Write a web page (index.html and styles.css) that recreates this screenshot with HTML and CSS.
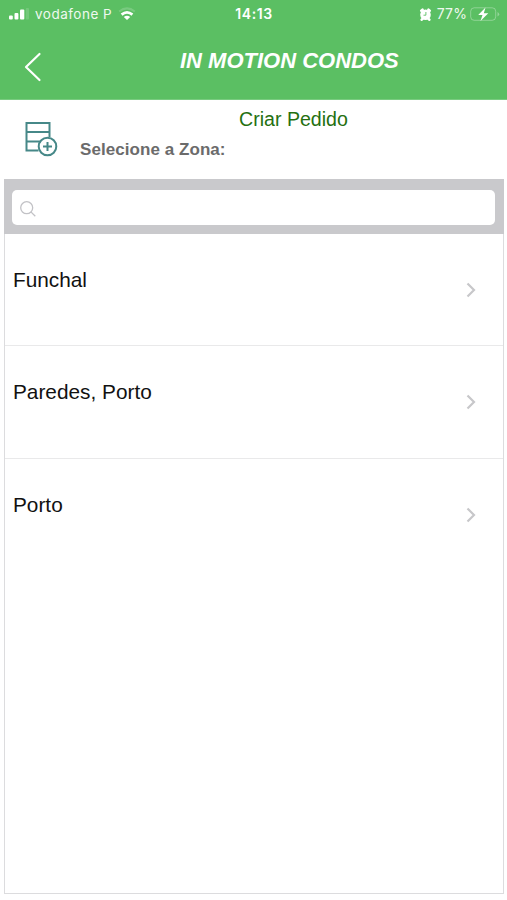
FILE: index.html
```html
<!DOCTYPE html>
<html lang="pt">
<head>
<meta charset="utf-8">
<title>In Motion Condos</title>
<link rel="stylesheet" href="styles.css">
</head>
<body>
<header class="header">
  <div class="status">
    <div class="status-left">
      <svg class="signal" width="20" height="12" viewBox="0 0 20 12" fill="#fff"><rect x="0" y="7.500" width="3.800" height="4.100" rx="1"/><rect x="5.500" y="5" width="3.900" height="6.600" rx="1"/><rect x="11" y="1.500" width="4.300" height="10.100" rx="1"/><rect x="16.800" y="0" width="3.200" height="11.600" rx="1" opacity=".15"/></svg>
      <span class="carrier">vodafone P</span>
      <svg class="wifi" width="18" height="14" viewBox="0 0 18 14" fill="none" stroke="#fff"><path d="M1.200 4.500Q9-1.800 16.800 4.500" stroke-width="2" opacity=".18"/><path d="M3.600 7.600Q9 3 14.400 7.600" stroke-width="2.700"/><path d="M5.800 10Q9 7.500 12.200 10L9 13z" fill="#fff" stroke="none"/></svg>
    </div>
    <span class="time">14:13</span>
    <div class="status-right">
      <svg class="alarm" width="13" height="13" viewBox="0 0 13 13"><path d="M2.300 2.700 3.500 1.700M10.700 2.700 9.500 1.700M3.200 11.200l-.5.500M9.800 11.200l.5.500" stroke="#fff" stroke-width="2.600" stroke-linecap="round"/><circle cx="6.500" cy="6.700" r="5.300" fill="#fff"/><path d="M6.900 4v3.200H4.500" fill="none" stroke="#5bbf63" stroke-width=".9"/></svg>
      <span class="percent">77%</span>
      <svg class="battery" width="30" height="15" viewBox="0 0 30 15"><rect x=".7" y=".8" width="25" height="12.500" rx="3.500" fill="none" stroke="#fff" opacity=".32"/><path d="M27.500 5v4.500q1.700-.7 1.700-2.200T27.500 5" fill="#fff" opacity=".35"/><path d="M15.500.5 8.200 8h4.300l-2 6L18.300 6.300h-4.500z" fill="#fff"/></svg>
    </div>
  </div>
  <div class="nav">
    <svg class="back" width="18" height="30" viewBox="0 0 18 30" fill="none" stroke="#fff" stroke-width="2.200" stroke-linecap="round" stroke-linejoin="round"><path d="M15.500 2 2 15 15.500 28"/></svg>
    <h1 class="title">IN MOTION CONDOS</h1>
  </div>
</header>
<section class="intro">
  <svg class="request" width="34" height="36" viewBox="0 0 34 36" fill="none" stroke="#468888" stroke-width="2"><path d="M14.500 29.500H2.500V2h23v14M2.500 11h23M2.500 20.500h14"/><circle cx="23.500" cy="25.500" r="8.800"/><path d="M23.500 21v9M19 25.500h9"/></svg>
  <div class="intro-text">
    <div class="heading">Criar Pedido</div>
    <div class="prompt">Selecione a Zona:</div>
  </div>
</section>
<main class="panel">
  <div class="searchbar">
    <div class="field">
      <svg width="16" height="16" viewBox="0 0 16 16" fill="none" stroke="#c2c2c6" stroke-width="1.300"><circle cx="6.700" cy="6.700" r="6"/><path d="M10.900 10.900 15.300 15.300"/></svg>
    </div>
  </div>
  <ul class="list">
    <li class="row"><span class="name">Funchal</span><svg class="chevron" width="10" height="16" viewBox="0 0 10 16"><path d="M1.500 1.500 8 8l-6.500 6.500"/></svg></li>
    <li class="row"><span class="name">Paredes, Porto</span><svg class="chevron" width="10" height="16" viewBox="0 0 10 16"><path d="M1.500 1.500 8 8l-6.500 6.500"/></svg></li>
    <li class="row"><span class="name">Porto</span><svg class="chevron" width="10" height="16" viewBox="0 0 10 16"><path d="M1.500 1.500 8 8l-6.500 6.500"/></svg></li>
  </ul>
</main>
</body>
</html>
```
FILE: styles.css
```css
* { box-sizing: border-box; }
body {
  margin: 0;
  height: 900px;
  overflow: hidden;
  background: #fff;
  font-family: "Liberation Sans", Arial, sans-serif;
  display: flex;
  flex-direction: column;
}
svg { display: block; flex: none; }
.header { height: 100px; background: #5bbf63; border-bottom: 1px solid #79cb80; color: #fff; flex: none; }
.status {
  height: 28px;
  padding: 0 7px 0 9px;
  display: grid;
  grid-template-columns: 1fr auto 1fr;
  align-items: center;
  font-family: Inter, sans-serif;
  font-size: 13.500px;
  line-height: 28px;
}
.status-left, .status-right { display: flex; align-items: center; }
.status-right { justify-content: flex-end; }
.carrier { margin: 0 6px; letter-spacing: .5px; opacity: .9; }
.time { font-size: 14px; font-weight: 600; letter-spacing: .6px; margin-right: 1px; }
.percent { margin: 0 3px 0 5px; font-size: 14px; letter-spacing: .1px; opacity: .9; }
.nav { height: 71px; display: flex; align-items: flex-start; }
.back { margin: 24px 0 0 24px; }
.title { margin: 20px 0 0 138px; font-size: 22px; line-height: 26px; font-style: italic; font-weight: 700; white-space: nowrap; }
.intro { height: 79px; display: flex; flex: none; padding-left: 24px; }
.request { margin-top: 21px; }
.intro-text { margin-left: 22px; }
.heading { margin: 7px 0 0 159px; font-size: 19.600px; line-height: 24px; color: #257010; }
.prompt { margin-top: 8px; font-size: 17px; line-height: 21px; font-weight: 700; letter-spacing: .06px; color: #6b6b6b; }
.panel { height: 715px; margin: 0 3px 0 4px; border: 1px solid #dcdcde; border-top: 0; flex: none; }
.searchbar { height: 55px; margin: 0 -1px; padding: 11px 9px 9px 8px; background: #c9c9cc; }
.field { height: 35px; background: #fff; border-radius: 5px; display: flex; align-items: center; padding: 2px 0 0 8px; }
.list { margin: 0; padding: 0; list-style: none; }
.row { height: 112.300px; display: flex; justify-content: space-between; padding: 0 27px 0 8px; border-bottom: 1px solid #e9e9ea; }
.row:last-child { border: 0; }
.name { padding-top: 33px; font-size: 20.800px; line-height: 26px; color: #111; }
.chevron { margin-top: 48px; fill: none; stroke: #c7c7ca; stroke-width: 2.200; }
```
